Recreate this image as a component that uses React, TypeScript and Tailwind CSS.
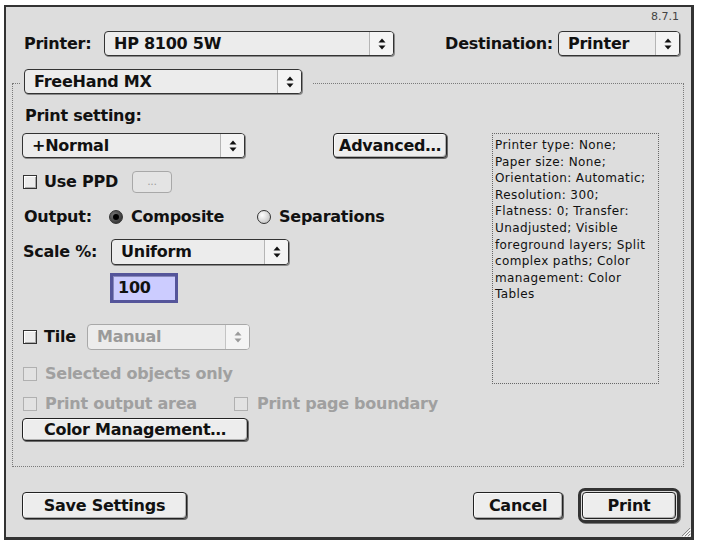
import React from 'react';

const ui = "font-['DejaVu_Sans',sans-serif] font-bold text-[16px] leading-[18px] tracking-[-0.25px]";

const Arrows = ({ dim }: { dim?: boolean }) => (
  <svg width="8" height="12" viewBox="0 0 8 12" className={dim ? 'text-[#9a9a9a]' : 'text-[#111]'}>
    <path d="M4 0.5 L7.5 4.5 H0.5Z M4 11.5 L7.5 7.5 H0.5Z" fill="currentColor" />
  </svg>
);

const Popup = ({ text, w, h = 'h-[25px]', dim }: { text: string; w: string; h?: string; dim?: boolean }) => (
  <div
    className={`${w} ${h} flex shrink-0 rounded-[4px] border ${
      dim ? 'border-[#a8a8a8] text-[#9a9a9a]' : 'border-[#333] text-[#111] shadow-[1px_1px_0_#8a8a8a]'
    } bg-[#ececec]`}
  >
    <span className="flex-1 flex items-center pl-[9px] whitespace-nowrap">{text}</span>
    <span
      className={`w-[24px] flex items-center justify-center border-l ${
        dim ? 'border-[#c4c4c4]' : 'border-[#b5b5b5]'
      } bg-[#f4f4f4] rounded-r-[3px]`}
    >
      <Arrows dim={dim} />
    </span>
  </div>
);

const Button = ({ label, w, h = 'h-[25px]' }: { label: string; w: string; h?: string }) => (
  <div
    className={`${w} ${h} shrink-0 flex items-center justify-center rounded-[4px] border border-[#222] bg-[#ededed] text-[#111] shadow-[inset_1px_1px_0_#fafafa,inset_-1px_-1px_0_#b0b0b0,1px_1px_0_#6a6a6a] whitespace-nowrap`}
  >
    {label}
  </div>
);

const Checkbox = ({ dim }: { dim?: boolean }) => (
  <span
    className={`block w-[14px] h-[14px] shrink-0 border ${
      dim ? 'border-[#b0b0b0] bg-[#e2e2e2]' : 'border-[#333] bg-[#ececec] shadow-[inset_1px_1px_0_#fff,inset_-1px_-1px_0_#aaa]'
    }`}
  />
);

const Radio = ({ on }: { on?: boolean }) => (
  <span
    className={`w-[14px] h-[14px] shrink-0 rounded-full border border-[#333] flex items-center justify-center ${
      on ? 'bg-[radial-gradient(circle_at_35%_35%,#777,#222)]' : 'bg-[radial-gradient(circle_at_35%_35%,#fff,#b8b8b8)]'
    }`}
  >
    {on && <span className="w-[6px] h-[6px] rounded-full bg-[#000]" />}
  </span>
);

const info = [
  'Printer type: None;',
  'Paper size: None;',
  'Orientation: Automatic;',
  'Resolution: 300;',
  'Flatness: 0; Transfer:',
  'Unadjusted; Visible',
  'foreground layers; Split',
  'complex paths; Color',
  'management: Color',
  'Tables',
];

export default function App() {
  return (
    <div className="w-[701px] h-[545px] bg-white pt-[5px] pl-[4px]">
      <div
        className={`${ui} relative w-[690px] h-[535px] border-[2px] border-r-[3px] border-b-[3px] border-[#333] bg-[#dddddd] flex flex-col`}
      >
        {/* version */}
        <div className="h-[20px] pt-[3px] pr-[12px] flex justify-end font-normal tracking-normal text-[11px] leading-[14px] text-[#444]">
          8.7.1
        </div>

        {/* printer / destination */}
        <div className="mt-[4px] h-[25px] flex items-center pl-[18px] pr-[11px]">
          <span className="w-[80px] text-[#111]">Printer:</span>
          <Popup text="HP 8100 5W" w="w-[290px]" />
          <span className="ml-auto text-[#111]">Destination:</span>
          <span className="ml-[5px]">
            <Popup text="Printer" w="w-[122px]" />
          </span>
        </div>

        {/* group */}
        <div className="mt-[27px] ml-[6px] w-[672px] h-[384px] border border-dotted border-[#7a7a7a] flex flex-col">
          <div className="-mt-[15px] ml-[8px] pl-[3px] pr-[10px] w-fit bg-[#dddddd]">
            <Popup text="FreeHand MX" w="w-[278px]" />
          </div>

          <div className="flex">
            <div className="w-[479px] pl-[9px] flex flex-col text-[#111]">
              <div className="mt-[13px] ml-[3px] h-[18px]">Print setting:</div>

              <div className="mt-[8px] h-[25px] flex items-center">
                <Popup text="+Normal" w="w-[223px]" />
                <span className="ml-[88px]">
                  <Button label="Advanced…" w="w-[114px]" />
                </span>
              </div>

              <div className="mt-[13px] h-[22px] flex items-center">
                <span className="ml-[1px]">
                  <Checkbox />
                </span>
                <span className="ml-[7px] w-[70px] whitespace-nowrap">Use PPD</span>
                <span className="ml-[18px] w-[40px] h-[22px] rounded-[4px] border border-[#a8a8a8] bg-[#e4e4e4] flex items-center justify-center text-[#a0a0a0] font-normal text-[11px]">
                  ...
                </span>
              </div>

              <div className="mt-[13px] h-[22px] flex items-center">
                <span className="ml-[2px] w-[71px]">Output:</span>
                <span className="ml-[14px]">
                  <Radio on />
                </span>
                <span className="ml-[8px] w-[94px] whitespace-nowrap">Composite</span>
                <span className="ml-[32px]">
                  <Radio />
                </span>
                <span className="ml-[8px] whitespace-nowrap">Separations</span>
              </div>

              <div className="mt-[11px] h-[26px] flex items-center">
                <span className="ml-[1px] w-[73px] whitespace-nowrap">Scale %:</span>
                <span className="ml-[15px]">
                  <Popup text="Uniform" w="w-[178px]" h="h-[26px]" />
                </span>
              </div>

              <div className="mt-[8px] ml-[88px] w-[68px] h-[30px] border-[3px] border-[#55559a] bg-[#ccccff] shadow-[inset_1px_1px_0_#8888bb] flex items-center pl-[5px]">
                100
              </div>

              <div className="mt-[21px] h-[26px] flex items-center">
                <span className="ml-[1px]">
                  <Checkbox />
                </span>
                <span className="ml-[7px] w-[32px]">Tile</span>
                <span className="ml-[11px]">
                  <Popup text="Manual" w="w-[163px]" h="h-[26px]" dim />
                </span>
              </div>

              <div className="mt-[14px] h-[20px] flex items-center text-[#a0a0a0]">
                <span className="ml-[1px]">
                  <Checkbox dim />
                </span>
                <span className="ml-[8px] whitespace-nowrap">Selected objects only</span>
              </div>

              <div className="mt-[10px] h-[20px] flex items-center text-[#a0a0a0]">
                <span className="ml-[1px]">
                  <Checkbox dim />
                </span>
                <span className="ml-[8px] w-[149px] whitespace-nowrap">Print output area</span>
                <span className="ml-[40px]">
                  <Checkbox dim />
                </span>
                <span className="ml-[9px] whitespace-nowrap">Print page boundary</span>
              </div>

              <div className="mt-[4px]">
                <Button label="Color Management…" w="w-[226px]" h="h-[23px]" />
              </div>
            </div>

            <div className="mt-[39px] w-[167px] h-[251px] border border-dotted border-[#666] pl-[2px] pt-[3px] font-normal text-[12px] tracking-[0.4px] leading-[16.6px] text-[#111] font-['DejaVu_Sans',sans-serif]">
              {info.map((l) => (
                <div key={l} className="whitespace-nowrap">
                  {l}
                </div>
              ))}
            </div>
          </div>
        </div>

        {/* bottom buttons */}
        <div className="mt-[21px] h-[35px] flex items-center pl-[16px] pr-[11px]">
          <Button label="Save Settings" w="w-[165px]" h="h-[27px]" />
          <span className="ml-auto">
            <Button label="Cancel" w="w-[90px]" h="h-[27px]" />
          </span>
          <div className="ml-[15px] w-[102px] h-[35px] rounded-[7px] border-[3px] border-[#333] p-[1px] bg-[#dddddd] shadow-[1px_1px_0_#777]">
            <div className="w-full h-full flex items-center justify-center rounded-[4px] border border-[#222] bg-[#ededed] text-[#111] shadow-[inset_1px_1px_0_#fafafa,inset_-1px_-1px_0_#b0b0b0]">
              Print
            </div>
          </div>
        </div>

        {/* resize grip */}
        <svg className="absolute right-0 bottom-0" width="12" height="12" viewBox="0 0 12 12">
          <path d="M11 3 L3 11 M11 6 L6 11 M11 9 L9 11" stroke="#888" strokeWidth="1" />
          <path d="M12 4 L4 12 M12 7 L7 12 M12 10 L10 12" stroke="#fff" strokeWidth="1" />
        </svg>
      </div>
    </div>
  );
}
